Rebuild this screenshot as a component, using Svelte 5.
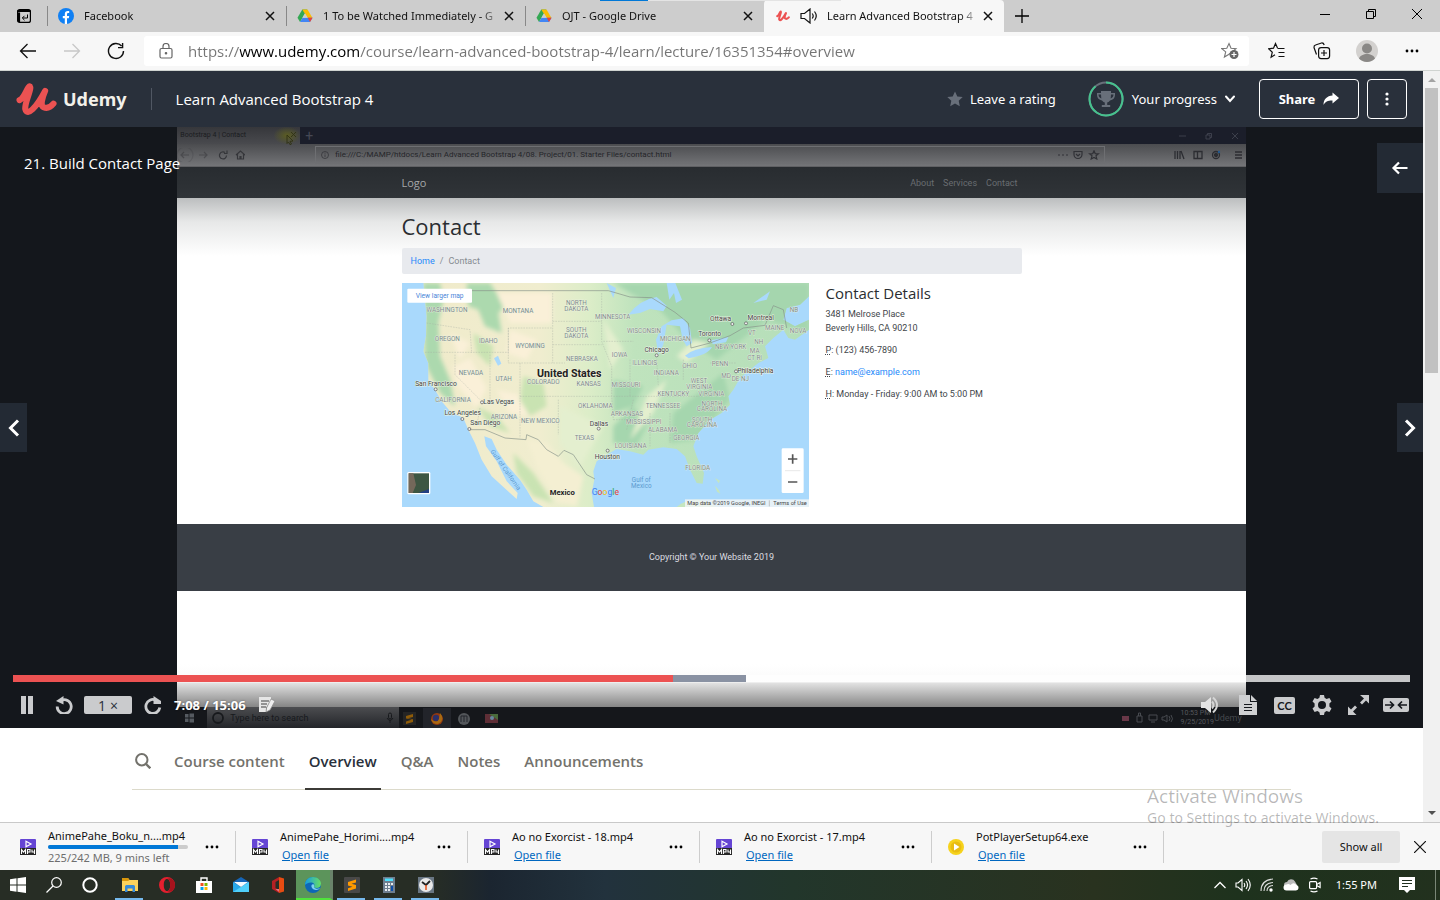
<script>
  const tabs = [
    { title: 'Facebook', icon: 'fb' },
    { title: '1 To be Watched Immediately - G', icon: 'drive' },
    { title: 'OJT - Google Drive', icon: 'drive' },
    { title: 'Learn Advanced Bootstrap 4', icon: 'udemy', active: true }
  ];
  const downloads = [
    { name: 'AnimePahe_Boku_n....mp4', kind: 'mp4', status: '225/242 MB, 9 mins left', done: 93 },
    { name: 'AnimePahe_Horimi....mp4', kind: 'mp4' },
    { name: 'Ao no Exorcist - 18.mp4', kind: 'mp4' },
    { name: 'Ao no Exorcist - 17.mp4', kind: 'mp4' },
    { name: 'PotPlayerSetup64.exe', kind: 'pot' }
  ];
  const sections = ['Course content', 'Overview', 'Q&A', 'Notes', 'Announcements'];
  let current = $state('Overview');
  let url = $state('https://www.udemy.com/course/learn-advanced-bootstrap-4/learn/lecture/16351354#overview');
  let position = $state(472);

  const states = [
    ['WASHINGTON', 141, 97], ['MONTANA', 354, 99], ['NORTH', 529, 77], ['DAKOTA', 529, 94], ['MINNESOTA', 638, 119],
    ['OREGON', 142, 184], ['IDAHO', 265, 191], ['WYOMING', 390, 204], ['SOUTH', 529, 157], ['DAKOTA', 529, 174],
    ['WISCONSIN', 732, 159], ['MICHIGAN', 826, 184], ['IOWA', 659, 231], ['NEBRASKA', 546, 243], ['ILLINOIS', 734, 256],
    ['NEVADA', 213, 286], ['UTAH', 311, 303], ['COLORADO', 430, 313], ['KANSAS', 566, 318], ['MISSOURI', 678, 323],
    ['INDIANA', 799, 285], ['OHIO', 869, 266], ['PENN', 960, 260], ['NEW YORK', 992, 207], ['VT', 1056, 167],
    ['NH', 1076, 194], ['MA', 1064, 221], ['CT RI', 1064, 240], ['MAINE', 1124, 152], ['NB', 1182, 98], ['NOVA', 1194, 159],
    ['MD', 978, 295], ['DE NJ', 1021, 303], ['WEST', 897, 311], ['VIRGINIA', 898, 328], ['KENTUCKY', 820, 350],
    ['VIRGINIA', 934, 350], ['CALIFORNIA', 159, 367], ['ARIZONA', 312, 417], ['NEW MEXICO', 421, 431],
    ['OKLAHOMA', 586, 386], ['ARKANSAS', 681, 408], ['TENNESSEE', 789, 385], ['NORTH', 936, 379], ['CAROLINA', 936, 395],
    ['MISSISSIPPI', 731, 433], ['ALABAMA', 788, 458], ['SOUTH', 906, 426], ['CAROLINA', 906, 442], ['GEORGIA', 859, 480],
    ['TEXAS', 553, 481], ['LOUISIANA', 692, 506], ['FLORIDA', 893, 571]
  ];
  const cities = [
    ['San Francisco', 108, 320, 107, 329], ['Las Vegas', 296, 374, 246, 368], ['Los Angeles', 188, 407, 187, 418],
    ['San Diego', 256, 437, 208, 448], ['Dallas', 597, 438, 596, 447], ['Houston', 622, 537, 623, 513],
    ['Chicago', 770, 218, 770, 227], ['Toronto', 929, 170, 928, 182], ['Ottawa', 962, 124, 997, 133],
    ['Montreal', 1082, 122, 1038, 131], ['Philadelphia', 1066, 281, 1008, 275]
  ];
</script>

{#snippet udemyMark()}
  <svg class="mark" viewBox="46 244 128 106" aria-hidden="true">
    <path d="M57 299C72 293 79 262 88 256C99 258 72 306 75 327C81 352 110 321 137 270C128 291 121 316 132 321C143 326 154 321 163 310" fill="none" stroke="#ec5252" stroke-width="19" stroke-linecap="round" stroke-linejoin="round" />
  </svg>
{/snippet}

{#snippet cross()}
  <svg width="10" height="10" viewBox="0 0 10 10" aria-hidden="true"><path d="M1 1l8 8M9 1l-8 8" stroke="currentColor" stroke-width="1.5" fill="none" /></svg>
{/snippet}

{#snippet dots()}
  <svg width="16" height="4" viewBox="0 0 16 4" aria-hidden="true"><circle cx="3" cy="2" r="1.4" /><circle cx="8" cy="2" r="1.4" /><circle cx="13" cy="2" r="1.4" /></svg>
{/snippet}

<div class="screen">
  <header class="tabstrip">
    <button class="tabmenu" aria-label="Tab actions">
      <svg width="16" height="16" viewBox="0 0 16 16"><rect x="1.6" y="1.6" width="12.800" height="12.800" rx="2" fill="none" stroke="#000" stroke-width="1.2" /><path d="M1.500 3h13M3 4.500v9.500" stroke="#000" stroke-width="2.200" /><path d="M11.500 6.500v3.500h-5M8.500 7.800l-2.200 2.200 2.200 2.200" fill="none" stroke="#000" /></svg>
    </button>
    {#each tabs as tab}
      <div class="tab" class:active={tab.active}>
        {#if tab.icon === 'fb'}
          <svg width="16" height="16" viewBox="0 0 16 16"><circle cx="8" cy="8" r="8" fill="#1080f4" /><path d="M6.800 16v-5.700H4.800V8h2V6.300c0-2.100 1.200-3.200 3-3.200.7 0 1.400.1 1.400.1v1.900h-1c-.9 0-1.200.6-1.200 1.200V8h2.200l-.4 2.300H9V16z" fill="#fff" /></svg>
        {:else if tab.icon === 'drive'}
          <svg width="16" height="16" viewBox="0 0 16 16"><path d="M5.300 1.500h5L5.700 9.500 3 14 .5 9.800z" fill="#34a853" /><path d="M5.300 1.500h5.200l5 8.500h-5z" fill="#fbbc04" /><path d="M3 14l2.600-4.200h10L13 14z" fill="#4285f4" /><path d="M10.800 9.800h4.700L13 14z" fill="#ea4335" /><path d="M5.300 9.800L8 5.200l2.700 4.600z" fill="#cdcdcd" /></svg>
        {:else}
          <span class="tinymark">{@render udemyMark()}</span>
          <svg class="audio" width="18" height="16" viewBox="0 0 18 16" fill="none" stroke="#111" stroke-width="1.200"><path d="M1 5.500h3.500L10 1v14l-5.500-4.500H1zM12.200 5.500q2 2.500 0 5M14.500 3.500q3.500 4.500 0 9" /></svg>
        {/if}
        <span class="tabtitle">{tab.title}</span>
        <button aria-label="Close tab">{@render cross()}</button>
      </div>
    {/each}
    <button class="newtab" aria-label="New tab"><svg width="14" height="14" viewBox="0 0 14 14"><path d="M7 0v14M0 7h14" stroke="#000" stroke-width="1.300" /></svg></button>
    <div class="winctl">
      <button aria-label="Minimize"><svg width="10" height="10" viewBox="0 0 10 10"><path d="M0 5.500h10" stroke="#000" /></svg></button>
      <button aria-label="Restore"><svg width="10" height="10" viewBox="0 0 10 10"><path d="M.5 2.500h7v7h-7zM2.500 2.500v-2h7v7h-2" fill="none" stroke="#000" /></svg></button>
      <button aria-label="Close"><svg width="10" height="10" viewBox="0 0 10 10"><path d="M0 0l10 10M10 0L0 10" stroke="#000" /></svg></button>
    </div>
    <div class="loader"></div>
  </header>

  <div class="toolbar">
    <div class="nav">
      <button aria-label="Back"><svg width="18" height="16" viewBox="0 0 18 16" fill="none" stroke="#111" stroke-width="1.300"><path d="M17 8H1.500M8.500 1l-7 7 7 7" /></svg></button>
      <button aria-label="Forward" disabled><svg width="18" height="16" viewBox="0 0 18 16" fill="none" stroke="#c8c8c8" stroke-width="1.300"><path d="M1 8h15.500M9.500 1l7 7-7 7" /></svg></button>
      <button aria-label="Refresh"><svg width="18" height="18" viewBox="0 0 18 18" fill="none" stroke="#111" stroke-width="1.400"><path d="M16.500 9A7.500 7.500 0 1 1 14.600 4M15.600 1v4.600H11" /></svg></button>
    </div>
    <div class="address">
      <svg width="14" height="16" viewBox="0 0 14 16" fill="none" stroke="#666" stroke-width="1.200"><rect x="1" y="5.500" width="12" height="9.500" rx="1.500" /><path d="M4 5.500V3.500a3 3 0 0 1 6 0v2" /><circle cx="7" cy="10.200" r=".7" fill="#666" /></svg>
      <input type="text" aria-label="Address" bind:value={url} />
      <button aria-label="Add to favorites"><svg width="18" height="18" viewBox="0 0 18 18"><path d="M8 1.500l2 4.700 5 .4-3.800 3.300L7.600 12.500 3.400 15l1.300-5.100L.8 6.600l5-.4z" fill="none" stroke="#777" stroke-width="1.100" /><circle cx="13" cy="12.500" r="4.500" fill="#666" /><path d="M13 10v5M10.500 12.500h5" stroke="#fff" stroke-width="1.200" /></svg></button>
    </div>
    <div class="actions">
      <button aria-label="Favorites"><svg width="18" height="18" viewBox="0 0 18 18" fill="none" stroke="#111" stroke-width="1.200"><path d="M9.500 6L7.500 1.500l-2 4.700-5 .5 3.800 3.500-1.200 5L7 12.800M9.500 6.500h7M10.500 10.500h6M10.500 14.500h6" /></svg></button>
      <button aria-label="Collections"><svg width="18" height="18" viewBox="0 0 18 18" fill="none" stroke="#111" stroke-width="1.200"><rect x="5.600" y="5.600" width="11" height="11" rx="2.500" /><path d="M11 8v6M8 11h6M3.500 12.500L1 5.500Q.8 3.500 2.500 3L8.500 1q2-.3 2.700 2" /></svg></button>
      <button aria-label="Profile"><svg width="22" height="22" viewBox="0 0 22 22"><circle cx="11" cy="11" r="11" fill="#d3d1cf" /><circle cx="11" cy="8.500" r="5" fill="#8a8886" /><path d="M3 18.500c2-6 14-6 16 0a11 11 0 0 1-16 0z" fill="#8a8886" /></svg></button>
      <button aria-label="Settings and more">{@render dots()}</button>
    </div>
  </div>

  <div class="viewport">
    <main>
      <div class="coursebar">
        <a class="brand" href="#home">{@render udemyMark()}<b>Udemy</b></a>
        <a class="course" href="#course">Learn Advanced Bootstrap 4</a>
        <button class="rating"><svg width="16" height="16" viewBox="0 0 16 16"><path d="M8 .5l2.300 5 5.400.6-4 3.700 1.100 5.500L8 12.500l-4.800 2.800 1.100-5.500-4-3.700 5.400-.6z" fill="#686f7a" /></svg>Leave a rating</button>
        <button class="progress">
          <svg width="36" height="36" viewBox="0 0 36 36"><circle cx="18" cy="18" r="16.500" fill="none" stroke="#686f7a" stroke-width="2" /><path d="M18 1.500A16.500 16.500 0 1 1 7.500 5.300" fill="none" stroke="#46c28e" stroke-width="2" /><path d="M13 10h10v2h4v2c0 3-2 5-5 5.500-1 1.300-2 1.800-2.800 2V24h3v2h-8.400v-2h3v-2.500c-.8-.2-1.800-.7-2.800-2-3-.5-5-2.500-5-5.500v-2h4zM13 13.500h-2.500c0 2 1 3.300 2.800 4zM23 13.500l-.3 4c1.800-.7 2.800-2 2.800-4z" fill="#686f7a" /></svg>
          Your progress
          <svg width="10" height="8" viewBox="0 0 10 8"><path d="M1 1.500l4 4.500 4-4.500" fill="none" stroke="#fff" stroke-width="2" stroke-linecap="round" /></svg>
        </button>
        <button class="outlined share">Share <svg width="16" height="14" viewBox="0 0 16 14"><path d="M9.500.5L16 6l-6.500 5.500V8.500C5 8.400 2.500 9.500.5 13 .5 7 4 4 9.500 3.500z" fill="#fff" /></svg></button>
        <button class="outlined more" aria-label="More options"><svg width="4" height="14" viewBox="0 0 4 14" fill="#fff"><circle cx="2" cy="2" r="1.600" /><circle cx="2" cy="7" r="1.600" /><circle cx="2" cy="12" r="1.600" /></svg></button>
      </div>

      <section class="player" aria-label="Video player">
        <div class="video">
          <div class="v-tabs">
            <div class="v-tab">Bootstrap 4 | Contact<i></i><svg width="16" height="14" viewBox="0 0 16 14" fill="none" stroke="#303214" stroke-width=".9"><path d="M9 1l5 5M14 1L9 6M5 4l6 6-3 .4 1.500 2.600-1.500.7L6.500 11 5 12.500z" /></svg></div><span>+</span>
            <svg class="v-win" width="64" height="10" viewBox="0 0 64 10" fill="none" stroke="#454854" stroke-width=".8"><path d="M1 5h7M28 4h4v4h-4zM29.500 4V2.500h4v4H32M54 2l6 6M60 2l-6 6" /></svg>
          </div>
          <div class="v-bar">
            <svg width="68" height="14" viewBox="0 0 68 14" fill="none" stroke="#35363a" stroke-width="1.200"><path d="M12 7H4M7 4L4 7l3 3M22 7h8M27 4l3 3-3 3" opacity=".5" /><circle cx="8" cy="7" r="8" opacity=".2" /><path d="M49.500 7.500A3.500 3.500 0 1 1 48 4.500M50 2.500v3h-3M59 7l4.500-4L68 7M60.500 6v5h6V6M63 11V8.500h1V11" /></svg>
            <div class="v-url"><svg width="8" height="8" viewBox="0 0 8 8" fill="none" stroke="#35363a" stroke-width=".8"><circle cx="4" cy="4" r="3.500" /><path d="M4 3.500V6M4 1.800v.8" /></svg><span>file:///C:/MAMP/htdocs/Learn Advanced Bootstrap 4/08. Project/01. Starter Files/contact.html</span>
              <svg width="42" height="10" viewBox="0 0 42 10" fill="none" stroke="#303136" stroke-width="1.200"><path d="M0 5h2M4 5h2M8 5h2M16 1.500h8v3a4 4 0 0 1-8 0zM18 4l2 2 2-2M36 .8l1.200 2.800 3.200.2-2.400 2 .8 3.200L36 7.500 33.200 9l.8-3.200-2.400-2 3.200-.2z" /></svg></div>
            <svg class="v-tools" width="72" height="10" viewBox="0 0 72 10" fill="none" stroke="#2c2d32" stroke-width="1.300"><path d="M4 1v8M6.500 1v8M9 1v8M10 1l3 8M23 1.500h8v7h-8zM26.500 1.500v7M64 2h7M64 5h7M64 8h7" /><circle cx="45" cy="5" r="3.500" /><circle cx="45" cy="5" r="1.500" fill="#2c2d32" /><circle cx="48" cy="2" r="1.200" fill="#235a91" stroke="none" /></svg>
          </div>
          <div class="v-nav"><div><b>Logo</b><span>About</span><span>Services</span><span>Contact</span></div></div>
          <div class="v-page">
            <div class="v-wrap">
              <h1>Contact</h1>
              <div class="crumbs"><a href="#vhome">Home</a><span>/</span><span>Contact</span></div>
              <div class="v-cols">
                <svg class="map" viewBox="6 10 1221 672" role="img" aria-label="Map of the United States">
                  <defs>
                    <linearGradient id="land"><stop offset="0" stop-color="#d6e7bd" /><stop offset=".08" stop-color="#f0ebcb" /><stop offset=".34" stop-color="#f0edcf" /><stop offset=".46" stop-color="#dcedc8" /><stop offset=".57" stop-color="#bfe3bd" /><stop offset="1" stop-color="#b5deb9" /></linearGradient>
                    <clipPath id="coast"><path d="M70 10L75 60 80 110 78 170 70 215 85 250 85 300 105 330 125 365 150 395 190 415 205 450 225 490 245 540 275 590 330 640 350 658 353 640 320 605 290 545 258 500 253 470 275 478 290 510 320 555 360 600 380 630 400 665 430 682H582L575 640 583 600 580 575 590 545 620 525 650 508 690 515 730 525 745 510 790 503 830 508 855 530 870 570 890 610 908 612 912 580 890 530 880 500 895 460 930 420 965 400 990 375 985 350 1000 330 1020 295 1050 270 1075 250 1105 235 1095 200 1120 175 1150 150 1165 175 1185 180 1227 150V120L1185 140 1150 120 1160 85 1200 75 1227 50V10Z" /></clipPath>
                    <filter id="soft"><feGaussianBlur stdDeviation="7" /></filter>
                  </defs>
                  <rect x="6" y="10" width="1221" height="672" fill="#a9d9fc" />
                  <g clip-path="url(#coast)">
                    <rect x="6" y="10" width="1221" height="672" fill="url(#land)" />
                    <g filter="url(#soft)">
                      <path d="M70 10H120L130 60 115 130 120 230 150 300 165 380 120 340 75 250zM200 10h70l45 70-20 20 10 60-50-20-20-50-30-10z" fill="#acd9ae" />
                      <path d="M290 40h165v90H330zM150 160l60 30-30 50zM160 260l50-25 50 90-30 60-60-70zM330 150l80 30-30 60-60-20zM290 330l90 20 20 60-70-10z" fill="#faf0d8" />
                      <path d="M370 290l60 20 10 70-50 30-30-50zM220 160l60 40-10 60-40-40zM230 380l60 30 40 50-60-20zM340 520l60 60 60 90-60-20-50-70z" fill="#c9e3b2" />
                      <path d="M640 10H1227V160L1100 120 950 240 860 180 780 90zM640 440l60-60 40 60-30 60-70-10zM820 400l150-120 20 80-100 120-80 10zM640 300l90 20-30 60-60 20z" fill="#a5d6ae" />
                      <path d="M690 480l50-130 60-50-40 100zM830 230l50-50 50 10-70 60zM610 120l60 90-40 60zM480 380l130 60-70 120-60-70z" fill="#e4efcf" />
                      <path d="M380 480l60 10 50 60 60 40-20 90-60-10-60-110z" fill="#f4efd2" />
                    </g>
                  </g>
                  <g fill="#a9d9fc"><path d="M685 105Q720 60 770 52L800 78 790 95 750 88 720 100zM775 225L768 180 785 140 815 122 850 116 870 145 876 190 860 200 848 180 840 140 800 135 790 195zM855 228Q880 205 936 202 925 225 866 236zM934 182L985 172 978 188 938 194zM282 236l12-8 10 24-10 6zM800 10l8 50 14-20 6 30 18-10-20-50zM1060 70l50-35-10 25zM620 10l20 45 8-30z" /></g>
                  <path d="M80 33H625L690 52 755 54 825 98 865 130 873 205 930 190 990 168 1030 145 1095 137 1120 78 1150 90 1160 145M208 450L255 450 315 475 378 480 380 465 415 480 440 510 475 530 492 512 520 525 560 585 585 598" fill="none" stroke="#87938a" stroke-width="2" />
                  <path d="M80 130L210 150 215 220M75 218H325V145H455M325 145V250H495M270 225V370M165 225V285L240 360M360 250V475M360 350H635M458 40V250M458 125H605M458 195H605M605 40V185L635 260V350L640 420M610 185H700M475 360V465M240 385L230 440M640 350H930M640 420H700M700 360L680 450M750 400V500M810 400V490M690 240V350M770 240L775 320M850 240V300M930 250H1010" fill="none" stroke="#a0aaa0" stroke-width="1.500" stroke-dasharray="5 3" opacity=".7" />
                  <g class="st">{#each states as [n, x, y]}<text {x} {y}>{n}</text>{/each}</g>
                  <g class="ct">{#each cities as [n, x, y, cx, cy]}<text {x} {y}>{n}</text><circle {cx} {cy} r="4.500" />{/each}</g>
                  <g class="big"><text x="508" y="291">United States</text><text x="487" y="645" class="mx">Mexico</text></g>
                  <g class="sea"><text x="724" y="607">Gulf of</text><text x="724" y="624">Mexico</text><text transform="translate(312 574) rotate(55)">Gulf of California</text></g>
                  <path d="M945 595l15 8-4 8zM945 618l12 14 4 10-10-6zM830 682q30-26 70-22l50 22z" fill="#c5e6c0" />
                  <text x="575" y="646" class="gg"><tspan fill="#4285f4">G</tspan><tspan fill="#ea4335">o</tspan><tspan fill="#fbbc04">o</tspan><tspan fill="#4285f4">g</tspan><tspan fill="#34a853">l</tspan><tspan fill="#ea4335">e</tspan></text>
                  <rect x="22" y="27" width="194" height="42" rx="3" fill="#fff" /><text x="119" y="55" class="lg">View larger map</text>
                  <rect x="22" y="577" width="69" height="67" rx="4" fill="#fff" /><rect x="26" y="581" width="61" height="59" fill="#3d5642" /><path d="M26 581h14l8 35-10 24H26z" fill="#74685a" /><path d="M55 640l32-12v12z" fill="#223f83" />
                  <rect x="1145" y="506" width="66" height="134" rx="4" fill="#fff" /><path d="M1164 538h28M1178 524v28M1164 607h28" stroke="#555" stroke-width="5" /><path d="M1155 573h46" stroke="#ddd" stroke-width="2" />
                  <rect x="855" y="659" width="372" height="23" fill="#f1f5f6" opacity=".85" /><path d="M1108 662v18" stroke="#aaa" stroke-width="2" />
                  <g class="cr"><text x="862" y="677">Map data ©2019 Google, INEGI</text><text x="1120" y="677">Terms of Use</text></g>
                </svg>
                <div class="details">
                  <h2>Contact Details</h2>
                  <p>3481 Melrose Place<br />Beverly Hills, CA 90210</p>
                  <p><abbr title="Phone">P</abbr>: (123) 456-7890</p>
                  <p><abbr title="Email">E</abbr>: <a href="#mail">name@example.com</a></p>
                  <p><abbr title="Hours">H</abbr>: Monday - Friday: 9:00 AM to 5:00 PM</p>
                </div>
              </div>
            </div>
            <div class="v-foot">Copyright © Your Website 2019</div>
          </div>
          <div class="v-task">
            <svg width="30" height="12" viewBox="0 0 30 12" fill="#555a60"><path d="M8 2h3.500v3.500H8zM12.500 1.500H17v4h-4.500zM8 6.500h3.500V10H8zM12.500 6.500H17v4h-4.500z" /></svg>
            <div class="v-search"><svg width="12" height="12" viewBox="0 0 12 12"><circle cx="6" cy="6" r="5" fill="none" stroke="#17191c" stroke-width="1.800" /></svg><span>Type here to search</span><svg width="8" height="12" viewBox="0 0 8 12" fill="none" stroke="#17191c"><rect x="2.500" y="1" width="3" height="6" rx="1.500" /><path d="M1 6q3 5 6 0M4 8.500V11" /></svg></div>
            <svg width="112" height="20" viewBox="0 0 112 20"><rect x="4" y="4" width="13" height="13" fill="#252525" /><path d="M14 6l-7 2v2.500l6 1-6 2V16l7-2v-2.800l-5-1L14 9z" fill="#8f5c08" /><path d="M24 0h28v20H24z" fill="#22242a" /><circle cx="38" cy="11" r="6" fill="#93380f" /><circle cx="37" cy="10" r="3.200" fill="#2b2f68" /><path d="M41 5q6 7-2 11-6 0-7-5 6 5 8 0z" fill="#a86a12" /><circle cx="65" cy="11" r="6" fill="#53565a" /><path d="M62 14V8h6v6M65 8v6" stroke="#22252a" fill="none" /><rect x="86" y="6" width="13" height="9" fill="#5e2e36" /><path d="M90 6h9v6z" fill="#4a6b3b" /><circle cx="93" cy="10" r="2" fill="#6888a0" /></svg>
            <svg class="v-tray" width="54" height="14" viewBox="0 0 54 14" fill="none" stroke="#484b50"><rect x="1" y="5" width="7" height="5" fill="#693848" stroke="none" /><path d="M16 5h5v6h-5zM17.500 5V2h2v3M28 4h8v5h-8zM30 11h4M41 6h2l3-2v7l-3-2h-2zM48 5q2 3 0 5M50 4q3 4 0 7" /></svg>
            <span class="v-clock">10:53 PM<br />9/25/2019</span><span class="v-brand">Udemy</span>
          </div>
        </div>

        <span class="lecture">21. Build Contact Page</span>
        <button class="side expand" aria-label="Open sidebar"><svg width="18" height="14" viewBox="0 0 18 14" fill="none" stroke="#fff" stroke-width="2.200"><path d="M16.500 7H2.500M8 1.500L2.500 7 8 12.500" /></svg></button>
        <button class="side prev" aria-label="Previous lecture"><svg width="12" height="18" viewBox="0 0 12 18" fill="none" stroke="#fff" stroke-width="3"><path d="M10 1.500L2.500 9l7.500 7.500" /></svg></button>
        <button class="side next" aria-label="Next lecture"><svg width="12" height="18" viewBox="0 0 12 18" fill="none" stroke="#fff" stroke-width="3"><path d="M2 1.500L9.500 9 2 16.500" /></svg></button>

        <div class="controls">
          <input class="seek" type="range" min="0" max="1000" bind:value={position} aria-label="Seek" style="--played: {position / 10}%" />
          <div class="row">
            <button aria-label="Pause"><svg width="14" height="18" viewBox="0 0 14 18" fill="#cacbcd"><path d="M1 0h5v18H1zM8 0h5v18H8z" /></svg></button>
            <button aria-label="Rewind"><svg width="18" height="18" viewBox="0 0 18 18"><path d="M5 5A7 7 0 1 1 2.200 10.500" fill="none" stroke="#cacbcd" stroke-width="2.800" /><path d="M8.500 0v8.500L1 5z" fill="#cacbcd" /></svg></button>
            <button class="rate">1 <small>×</small></button>
            <button aria-label="Forward"><svg width="18" height="18" viewBox="0 0 18 18"><path d="M11.500 4A7 7 0 1 0 15.800 11.500" fill="none" stroke="#cacbcd" stroke-width="2.800" /><path d="M9.500 0v8h7.500V5z" fill="#cacbcd" /></svg></button>
            <span class="time">7:08 / 15:06</span>
            <button aria-label="Add note"><svg width="18" height="16" viewBox="0 0 18 16"><path d="M1 0h12v3L8 11v4H1z" fill="#e6e6e6" /><path d="M3 4h8M3 7h6M3 10h5" stroke="#777" stroke-width="1.300" /><path d="M13 2l4 2-5 9-4 2 .5-4z" fill="#eee" stroke="#888" stroke-width=".7" /></svg></button>
            <span class="grow"></span>
            <button aria-label="Volume"><svg width="20" height="18" viewBox="0 0 20 18"><path d="M0 6h4l6-5v16l-6-5H0z" fill="#e3e3e3" /><path d="M11 5.500q3 3.500 0 7M12 1.500q8 7.500 0 15" fill="none" stroke="#d5d5d5" stroke-width="2" /></svg></button>
            <button aria-label="Transcript"><svg width="18" height="20" viewBox="0 0 18 20"><path d="M0 0h11v7h7v13H0z" fill="#cfd0d2" /><path d="M12 0l6 6h-6z" fill="#cfd0d2" /><path d="M5 9.500h8M5 12.500h8M5 15.500h8" stroke="#14171c" stroke-width="1.200" /></svg></button>
            <button class="cc" aria-label="Captions">CC</button>
            <button aria-label="Settings"><svg width="20" height="20" viewBox="0 0 20 20"><path fill-rule="evenodd" d="M8 0h4l.6 2.800 2 1.100L17.400 3l2.100 3.600-2.100 2v2.800l2.100 2L17.400 17l-2.800-.9-2 1.100L12 20H8l-.6-2.800-2-1.100-2.800.9-2.100-3.600 2.100-2V8.600l-2.100-2L2.600 3l2.800.9 2-1.100zM10 6a4 4 0 1 0 0 8 4 4 0 0 0 0-8z" fill="#cacbcd" /></svg></button>
            <button aria-label="Full screen"><svg width="22" height="20" viewBox="0 0 22 20" fill="#cacbcd"><path d="M12 0h9v8.500l-3-3-4 4-2-2 4-4zM0 20v-8.500l3 3 4-4 2 2-4 4 3.500 3.500z" /></svg></button>
            <button aria-label="Exit expanded view"><svg width="26" height="14" viewBox="0 0 26 14"><rect width="26" height="14" rx="2" fill="#cacbcd" /><path d="M2 7h8M7 3.500L10.500 7 7 10.500M24 7h-8M19 3.500L15.500 7l3.500 3.500" fill="none" stroke="#14171c" stroke-width="1.700" /></svg></button>
          </div>
        </div>
      </section>

      <nav class="sections" aria-label="Course sections">
        <button class="find" aria-label="Search course"><svg width="16" height="16" viewBox="0 0 16 16" fill="none" stroke="#73726c" stroke-width="2"><circle cx="6.800" cy="6.800" r="5.700" /><path d="M11 11l4.300 4.300" stroke-width="2.400" /></svg></button>
        {#each sections as s}
          <button class:on={s === current} onclick={() => (current = s)}>{s}</button>
        {/each}
      </nav>
    </main>
    <div class="scroll" aria-hidden="true"><i class="up"></i><span></span><i class="down"></i></div>
  </div>

  <footer class="downloads">
    {#each downloads as d}
      <div class="dl">
        {#if d.kind === 'mp4'}
          <svg width="16" height="16" viewBox="0 0 16 16"><rect width="16" height="16" rx="1" fill="#6545d4" /><path d="M6 2.200v5.600L11 5z" fill="none" stroke="#fff" stroke-width="1.200" /><path d="M0 9h16v7H0z" fill="#262626" /><path d="M1.500 15v-4.500L3.500 13l2-2.500V15M7.500 15v-4.500H10V13H7.500M12 10.500V13h2.500M14.500 10.500V15" fill="none" stroke="#fff" stroke-width="1.100" /></svg>
        {:else}
          <svg width="16" height="16" viewBox="0 0 16 16"><circle cx="8" cy="8" r="8" fill="#f6d21c" /><circle cx="8" cy="8" r="5.500" fill="#e9bd12" /><path d="M6 4.500v7L11.500 8z" fill="#fff" /></svg>
        {/if}
        <div class="dltext">
          <span>{d.name}</span>
          {#if d.status}
            <div class="bar"><i style="width: {d.done}%"></i></div>
            <span class="status">{d.status}</span>
          {:else}
            <a href="#open">Open file</a>
          {/if}
        </div>
        <button aria-label="Download options">{@render dots()}</button>
      </div>
    {/each}
    <button class="showall">Show all</button>
    <button class="dlclose" aria-label="Close downloads"><svg width="12" height="12" viewBox="0 0 12 12"><path d="M0 0l12 12M12 0L0 12" stroke="#111" stroke-width="1.200" /></svg></button>
  </footer>

  <div class="taskbar">
    <div class="shell">
      <button aria-label="Start"><svg width="16" height="16" viewBox="0 0 16 16" fill="#fff"><path d="M0 2.200l6.500-.9v6.200H0zM7.500 1.200L16 0v7.500H7.500zM0 8.500h6.500v6.200L0 13.800zM7.500 8.500H16V16l-8.500-1.200z" /></svg></button>
      <button aria-label="Search"><svg width="16" height="16" viewBox="0 0 16 16" fill="none" stroke="#fff" stroke-width="1.200"><circle cx="10.500" cy="5.500" r="4.800" /><path d="M7 9L.5 15.500" /></svg></button>
      <button aria-label="Cortana"><svg width="16" height="16" viewBox="0 0 16 16"><circle cx="8" cy="8" r="6.700" fill="none" stroke="#fff" stroke-width="2" /></svg></button>
    </div>
    <button class="open" aria-label="File Explorer"><svg width="16" height="16" viewBox="0 0 16 16"><path d="M0 1h6l1.500 2H16v11H0z" fill="#fcd25c" /><path d="M0 1h6l1.500 2-1.500 1H0z" fill="#d9970c" /><path d="M3 9.500Q3 8 4.500 8h7Q13 8 13 9.500V15h-2.500v-3.500h-5V15H3z" fill="#368ad8" /></svg></button>
    <button aria-label="Opera"><svg width="16" height="16" viewBox="0 0 16 16"><path fill-rule="evenodd" d="M8 0a8 8 0 1 0 0 16A8 8 0 0 0 8 0zM8 2c2 0 3.200 2.500 3.200 6S10 14 8 14 4.800 11.500 4.800 8 6 2 8 2z" fill="#e3202f" /><path d="M8 2q3-1.500 5 0 3 2 3 6t-3 6q-2 1.500-5 0 3.200 0 3.200-6T8 2z" fill="#a6131d" /></svg></button>
    <button aria-label="Microsoft Store"><svg width="16" height="16" viewBox="0 0 16 16"><path d="M5 4V1h6v3" fill="none" stroke="#fff" stroke-width="1.400" /><path d="M0 4h16v12H0z" fill="#fff" /><path d="M4.500 6H7.500v3h-3z" fill="#f25022" /><path d="M8.500 6h3v3h-3z" fill="#7fba00" /><path d="M4.500 10h3v3h-3z" fill="#00a4ef" /><path d="M8.500 10h3v3h-3z" fill="#ffb900" /></svg></button>
    <button aria-label="Mail"><svg width="16" height="16" viewBox="0 0 16 16"><path d="M0 5l8-5 8 5v4H0z" fill="#1565b7" /><path d="M0 5l8 5 8-5v10H0z" fill="#28a8ea" /><path d="M0 15L16 5v10z" fill="#50d0fa" /><path d="M1 5h14L8 10z" fill="#f5fbff" /></svg></button>
    <button aria-label="Office"><svg width="16" height="16" viewBox="0 0 16 16"><path d="M2 4l7-4v3L5.500 5v6L9 13v3l-7-4z" fill="#b42024" /><path d="M9 0l5 1.500v13L9 16z" fill="#e74c12" /><path d="M5.500 12H9v3z" fill="#e77080" /></svg></button>
    <button class="edge" aria-label="Microsoft Edge"><svg width="16" height="16" viewBox="0 0 16 16"><defs><linearGradient id="eg"><stop offset="0" stop-color="#169ce4" /><stop offset="1" stop-color="#69de60" /></linearGradient></defs><circle cx="8" cy="8" r="8" fill="#0d67b8" /><path d="M0 8C0 3 3.500 0 8 0c5 0 8 3.500 8 6.500S14 11 11.500 11C9 11 8.500 10 9.200 9 10 7 8.200 5.500 6 5.500 3 5.500.5 7 0 8z" fill="url(#eg)" /><path d="M9.200 8.500c-.8 2 1 3.300 3 3.300 1.200 0 2-.4 3-1-1.500 2-3.500 2.500-5.200 2C7 12 5.500 9.500 7 7.500q2-1 2.200 1z" fill="#7fd0ef" /></svg></button>
    <button class="open" aria-label="Sublime Text"><svg width="16" height="16" viewBox="0 0 16 16"><rect width="16" height="16" rx="1" fill="#484848" /><path d="M12 2.500L4 5v3.500l4.500 1.300L4 11.200V14l8-2.500V8L7.500 6.700 12 5.500z" fill="#ff9a00" /></svg></button>
    <button class="open" aria-label="Calculator"><svg width="16" height="16" viewBox="0 0 16 16"><path d="M2 0h12v16H2z" fill="#6d7d8e" /><path d="M4 1.500h8v2.500H4z" fill="#4de1ff" /><path d="M4 6h2v2H4zM7 6h2v2H7zM10 6h2v2h-2zM4 9h2v2H4zM7 9h2v2H7zM4 12h2v2H4zM7 12h2v2H7z" fill="#e8edf1" /><path d="M10 9h2v5h-2z" fill="#0b4dab" /></svg></button>
    <button class="open" aria-label="Alarms"><svg width="16" height="16" viewBox="0 0 16 16"><path d="M0 0h16v16H0z" fill="#697683" /><circle cx="8" cy="8" r="7" fill="#e9e9e9" /><path d="M4 5l4 3 4-4" stroke="#222" stroke-width="1.800" fill="none" /><path d="M8 8v5" stroke="#e65722" stroke-width="1.600" /></svg></button>
    <div class="tray">
      <svg width="12" height="8" viewBox="0 0 12 8" fill="none" stroke="#fff" stroke-width="1.300"><path d="M.5 7L6 1.500 11.500 7" /></svg>
      <svg width="16" height="14" viewBox="0 0 16 14" fill="none" stroke="#fff" stroke-width="1.100"><path d="M1 5h2l4-3.500v11L3 9H1zM9 5q1.500 2 0 4M11 3q3 4 0 8M13 1q4.500 6 0 12" /></svg>
      <svg width="14" height="14" viewBox="0 0 14 14" fill="none" stroke="#ddd" stroke-width="1.100"><path d="M1 13Q1 2 13 1M4 13Q4 5 13 4.500M7 13Q7 8 13 7.500" /><circle cx="11" cy="12" r="1.700" fill="#fff" stroke="none" /></svg>
      <svg width="16" height="12" viewBox="0 0 16 12"><path d="M1 6a3 3 0 0 1 3-3 4.500 4.500 0 0 1 8-.5L14 6v3H3z" fill="#bbb" /><path d="M3.500 11.500a3 3 0 0 1 0-6q2-1 4 .5 3-3.500 6 0a2.800 2.800 0 0 1-.5 5.500z" fill="#fff" /></svg>
      <svg width="14" height="16" viewBox="0 0 14 16" fill="none" stroke="#fff" stroke-width="1.200"><rect x="1.600" y="4.600" width="7" height="7" rx="1" /><path d="M8.600 7.500l3.500-2v5l-3.500-2M2.500 2Q6 .2 9.500 2M2.500 14Q6 15.800 9.500 14" /></svg>
      <time>1:55 PM</time>
      <svg class="note" width="16" height="16" viewBox="0 0 16 16"><path d="M0 0h16v13h-5l-3 3-3-3H0z" fill="#fff" /><path d="M3 3.500h10M3 6.500h10M3 9.500h6" stroke="#213020" stroke-width="1.200" /></svg>
    </div>
  </div>

  <div class="watermark"><strong>Activate Windows</strong><span>Go to Settings to activate Windows.</span></div>
</div>

<style>
  :global(body) { margin: 0; }
  .screen { position: relative; display: flex; flex-direction: column; min-height: 100vh; font-family: "Open Sans", "Noto Sans", sans-serif; font-size: 12px; color: #111; background: #fff; overflow: hidden; }
  button { font: inherit; color: inherit; border: 0; padding: 0; background: none; display: flex; align-items: center; justify-content: center; }
  a { color: inherit; text-decoration: none; }
  svg { display: block; flex: none; }

  .tabstrip { position: relative; display: flex; height: 32px; background: #cdcdcd; }
  .tabmenu { width: 47px; }
  .tab { box-sizing: border-box; width: 239px; display: flex; align-items: center; gap: 10px; padding: 0 10px 0 11px; position: relative; }
  .tab:not(.active)::before { content: ""; position: absolute; left: 0; top: 6px; height: 20px; border-left: 1px solid #888; }
  .tab.active { background: #f7f7f7; border-radius: 4px 4px 0 0; width: 240px; padding-left: 12px; }
  .tab button { width: 12px; height: 16px; margin-left: -8px; }
  .tabtitle { flex: 1; min-width: 0; overflow: hidden; white-space: nowrap; font: 11px/16px "Noto Sans", sans-serif; mask-image: linear-gradient(90deg, #000 calc(100% - 20px), transparent); }
  .tinymark { width: 14px; } .tinymark .mark { width: 14px; height: 12px; }
  .audio { margin-right: -1px; }
  .newtab { width: 36px; }
  .winctl { margin-left: auto; display: flex; height: 28px; }
  .winctl button { width: 46px; }
  .loader { position: absolute; left: 600px; top: 0; width: 241px; height: 1px; background: linear-gradient(90deg, #0078d7 20%, #e4e4e4 20%); }

  .toolbar { display: flex; align-items: center; height: 38px; background: #f7f7f7; border-bottom: 1px solid #cfd3d0; }
  .nav { display: flex; padding: 0 6px; } .nav button, .actions button { width: 44px; height: 30px; }
  .address { flex: 1; display: flex; align-items: center; gap: 15px; height: 30px; padding: 0 10px 0 15px; background: #fff; border-radius: 3px; }
  .address input { flex: 1; min-width: 0; border: 0; outline: 0; padding: 0; font: 15px/24px "Open Sans", sans-serif; color: transparent; background: linear-gradient(90deg, #747474 52px, #000 52px, #000 172px, #747474 172px); background-clip: text; -webkit-background-clip: text; }
  .actions { display: flex; padding: 0 6px; gap: 1px; }

  .viewport { flex: 1; display: flex; }
  main { flex: 1; min-width: 0; }
  .scroll { width: 17px; background: #f1f1f1; display: flex; flex-direction: column; align-items: center; }
  .scroll span { width: 13px; height: 285px; background: #c1c1c1; }
  .scroll i { border: 4px solid transparent; }
  .up { border-top: 0 !important; border-bottom-color: #a3a3a3 !important; margin: 7px 0 6px; }
  .down { border-bottom: 0 !important; border-top-color: #505050 !important; margin: auto 0 7px; }

  .coursebar { display: flex; align-items: center; height: 56px; padding: 0 16px; background: #29303b; color: #fff; font-size: 15px; }
  .coursebar button { font: 13px/20px "Noto Sans", sans-serif; }
  .brand { display: flex; align-items: center; gap: 6px; padding-right: 24px; border-right: 1px solid #505763; line-height: 22px; }
  .brand .mark { width: 41px; height: 35px; margin: -7px 0; }
  .brand b { font: 700 18px/22px "Noto Sans", sans-serif; color: #f3f1ea; }
  .course { margin-left: 24px; flex: 1; }
  .rating { gap: 7px; } .progress { gap: 8px; margin: 0 24px 0 32px; }
  .outlined { box-sizing: border-box; height: 40px; border: 1px solid #fff; border-radius: 4px; }
  .coursebar .share { width: 100px; gap: 8px; font-weight: 700; margin-right: 8px; } .more { width: 40px; }

  .player { position: relative; aspect-ratio: 1423 / 601; background: #14171c; display: flex; justify-content: center; }
  .video { height: 100%; aspect-ratio: 16 / 9; display: flex; flex-direction: column; overflow: hidden; background: #fff; font: 9px/12px Roboto, sans-serif; }
  .v-tabs { height: 17px; display: flex; align-items: center; background: #1b1e2a; color: #454854; font-size: 14px; }
  .v-tab { position: relative; width: 120px; height: 17px; padding-left: 3px; margin-right: 5px; background: linear-gradient(#36373b, #494a4e); color: #1a1c20; font-size: 7px; line-height: 17px; }
  .v-tab i { position: absolute; right: 0; top: 0; width: 26px; height: 17px; border-radius: 8px; background: radial-gradient(#5c5d22, #5c5d2200 75%); }
  .v-tab svg { position: absolute; right: 2px; top: 4px; }
  .v-win { margin-left: auto; margin-right: 4px; }
  .v-bar { height: 22px; display: flex; align-items: center; background: linear-gradient(#4b4c4f, #747578); border-bottom: 1px solid #606164; color: #242529; }
  .v-url { flex: 1; display: flex; align-items: center; gap: 6px; margin: 0 66px 0 70px; padding: 0 4px 0 5px; height: 16px; border: 1px solid #6e6f72; font-size: 8px; }
  .v-url span { flex: 1; } .v-tools { margin-right: 3px; }
  .v-nav { height: 31px; background: linear-gradient(#282c30, #303438); color: #696d71; }
  .v-nav div, .v-wrap { width: 620px; margin: 0 auto; }
  .v-nav div { display: flex; align-items: center; gap: 9px; height: 31px; } .v-nav b { flex: 1; font: 11px/16px "Open Sans", sans-serif; color: #a5a7a9; } .v-nav span:last-child { margin-right: 4px; }
  .v-page { flex: 1; background: linear-gradient(#bcbebf, #e7e8e8 24px, #fff 58px, #fff 466px, #fafafa 484px, #e2e2e2 485px, #858585 509px); }
  h1 { margin: 0; padding: 14px 0 6px; font: 22px/29px "Open Sans", sans-serif; padding-bottom: 7px; color: #2a2d31; }
  .crumbs { display: flex; gap: 5px; align-items: center; height: 26px; padding-left: 9px; border-radius: 2px; background: #e8eaee; color: #858a90; margin-bottom: 9px; }
  .crumbs a, .details a { color: #2689fa; }
  .v-cols { display: flex; gap: 17px; height: 224px; }
  .map { width: 407px; height: 224px; font-family: Roboto, sans-serif; text-anchor: middle; }
  .st text { font-size: 19px; fill: #7e8a88; stroke: #edf4e6; stroke-width: 2; paint-order: stroke; }
  .ct text { font-size: 20px; fill: #444; stroke: #edf4e6; stroke-width: 3; paint-order: stroke; }
  .ct circle { fill: #eee; stroke: #555; stroke-width: 2; }
  .big text { font-size: 32px; font-weight: 700; fill: #222; stroke: #f4f1dc; stroke-width: 3; paint-order: stroke; } .big .mx { font-size: 23px; }
  .sea { font-size: 19px; fill: #5c99cf; } .gg { font-size: 26px; text-anchor: start; }
  .lg { font-size: 20px; fill: #4a86d8; } .cr { font-size: 17px; text-anchor: start; fill: #444; }
  .details { color: #42464a; line-height: 14px; } h2 { margin: 0 0 4px; font: 15px/20px "Open Sans", sans-serif; color: #2a2d31; }
  .details p { margin: 0 0 8px; } abbr { text-decoration: underline dotted; text-underline-offset: 1px; }
  .v-foot { margin-top: 17px; height: 67px; line-height: 67px; text-align: center; background: #393e45; color: #dcdde0; }
  .v-task { position: relative; height: 21px; display: flex; align-items: center; background: #15171b; color: #333539; }
  .v-search { box-sizing: border-box; width: 192px; height: 21px; display: flex; align-items: center; gap: 6px; padding: 0 5px; background: linear-gradient(#4c4d50, #232529); color: #17191d; }
  .v-search span { flex: 1; }
  .v-tray { margin: 0 6px 0 auto; } .v-clock { font-size: 7px; line-height: 9px; color: #55585d; } .v-brand { color: #44474c; padding: 0 4px 0 0; }

  .lecture { position: absolute; left: 24px; top: 26px; font-size: 15px; line-height: 20px; color: #fff; }
  .side { position: absolute; background: #232a34; }
  .expand { right: 0; top: 16px; width: 46px; height: 50px; } .prev, .next { top: 276px; height: 49px; } .prev { left: 0; width: 27px; } .next { right: 0; width: 26px; }
  .controls { position: absolute; left: 13px; right: 13px; bottom: 8px; }
  .seek { appearance: none; display: block; width: 100%; height: 7px; margin: 0 0 8px; background: linear-gradient(90deg, #ec5252 var(--played), #8a92a3 var(--played), #8a92a3 52.5%, #ffffffc0 52.5%); }
  .seek::-webkit-slider-thumb { appearance: none; width: 1px; height: 7px; background: #ec5252; }
  .row { display: flex; align-items: center; gap: 12px; height: 30px; padding: 0 2px 0 1px; color: #fff; }
  .row button { width: 25px; height: 24px; }
  .row button.rate { width: 48px; height: 18px; margin: 0 -4px; gap: 4px; border-radius: 2px; background: #cacbcd; color: #29303b; font-size: 14px; } .rate small { font-size: 14px; }
  .row button.cc { width: 21px; height: 17px; margin: 0 2px; border-radius: 2px; background: #cacbcd; color: #14171c; font: 700 11px Lato, sans-serif; }
  .time { font-size: 13px; font-weight: 700; margin-left: -3px; margin-right: -3px; text-shadow: 0 0 2px #0006; } .grow { flex: 1; }

  .sections { display: flex; gap: 16px; height: 61px; margin: 0 132px; border-bottom: 1px solid #dcdacb; }
  .sections button { padding: 5px 4px 0; height: 62px; font-size: 15px; font-weight: 600; color: #73726c; border-bottom: 2px solid transparent; } .sections .find { padding: 5px 3px 0; }
  .sections button.on { color: #29303b; border-color: #3c3b37; }

  .downloads { box-sizing: border-box; display: flex; align-items: center; height: 48px; padding-left: 4px; background: #f7f7f7; border-top: 1px solid #c9c9c9; font: 11px/18px "Noto Sans", sans-serif; }
  .dl { box-sizing: border-box; width: 232px; height: 32px; padding: 0 11px 0 16px; display: flex; align-items: center; gap: 12px; border-right: 1px solid #cdcdcd; }
  .dltext { width: 140px; display: flex; flex-direction: column; padding-bottom: 2px; white-space: nowrap; } .dltext a { margin-left: 2px; color: #0067c0; text-decoration: underline; }
  .dltext:has(.bar) { padding-bottom: 0; }
  .bar { height: 4px; border-radius: 2px; background: #ccc; overflow: hidden; } .bar i { display: block; height: 4px; background: #0078d7; } .status { color: #6e6e6e; }
  .dl button { width: 24px; height: 24px; }
  .showall { width: 78px; height: 32px; margin-left: auto; background: #e5e5e5; border-radius: 2px; } .dlclose { width: 40px; height: 32px; }

  .taskbar { display: flex; height: 30px; color: #fff; background: linear-gradient(90deg, #272d25 30%, #1b2530 34%, #22323d 42%, #22362b 55%, #29321f 76%, #1e321d 86%, #22311e); }
  .shell { display: flex; width: 111px; }
  .taskbar button { box-sizing: border-box; width: 37px; height: 30px; position: relative; } .taskbar .shell button { width: 36px; }
  .taskbar button.open::after { content: ""; position: absolute; left: 4px; right: 5px; bottom: 0; height: 2px; background: #76b9ed; }
  .taskbar .edge { background: #5c945b; border-bottom: 2px solid #50e33c; border-right: 3px solid #69836a; padding-top: 2px; }
  .tray { margin-left: auto; display: flex; align-items: center; gap: 9px; padding-right: 20px; margin-right: 4px; border-right: 1px solid #7a8777; } .tray time { margin-left: 5px; font: 11px/16px "Noto Sans", sans-serif; } .note { margin-left: 13px; }
  .watermark { position: absolute; right: 61px; bottom: 72px; display: flex; flex-direction: column; color: #00000048; pointer-events: none; font: 14px/20px "Noto Sans", sans-serif; } .watermark strong { font: 19px/24px "Open Sans", sans-serif; }
</style>
